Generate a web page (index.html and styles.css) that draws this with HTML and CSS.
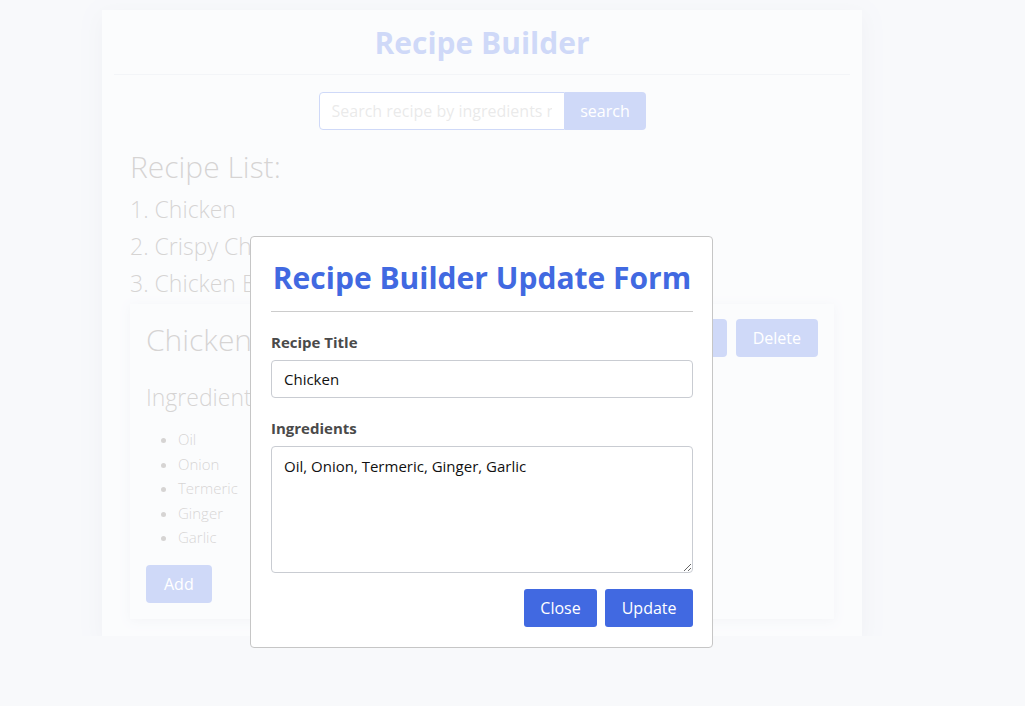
FILE: index.html
```html
<!DOCTYPE html>
<html lang="en">
<head>
  <meta charset="UTF-8">
  <meta name="viewport" content="width=device-width, initial-scale=1.0">
  <title>Recipe Builder</title>
  <link rel="stylesheet" href="styles.css">
</head>
<body>
  <div class="app">
    <header>
      <h1>Recipe Builder</h1>
    </header>

    <div class="search">
      <input type="text" placeholder="Search recipe by ingredients name" />
      <button>search</button>
    </div>

    <main>
      <h2 class="list-title">Recipe List:</h2>
      <div class="recipe-list">
        <p>1. Chicken</p>
        <p>2. Crispy Chicken</p>
        <p>3. Chicken Burger</p>
      </div>

      <!-- Selected recipe -->
      <div class="recipe-card">
        <div class="card-head">
          <h2>Chicken</h2>
          <div class="card-actions">
            <button>Edit</button>
            <button>Delete</button>
          </div>
        </div>
        <h3>Ingredients</h3>
        <ul>
          <li>Oil</li>
          <li>Onion</li>
          <li>Termeric</li>
          <li>Ginger</li>
          <li>Garlic</li>
        </ul>
        <button>Add</button>
      </div>
    </main>
  </div>

  <!-- Update modal -->
  <div class="overlay"></div>
  <div class="modal">
    <h2>Recipe Builder Update Form</h2>
    <label for="title">Recipe Title</label>
    <input type="text" id="title" value="Chicken" />
    <label for="ingredients">Ingredients</label>
    <textarea id="ingredients">Oil, Onion, Termeric, Ginger, Garlic</textarea>
    <div class="modal-actions">
      <button>Close</button>
      <button>Update</button>
    </div>
  </div>
</body>
</html>
```

FILE: styles.css
```css
body {
    font-family: "Open Sans", "Noto Sans", sans-serif;
    margin: 0;
    padding: 0;
    background: #e1e5f0;
  }

  button {
    font-family: inherit;
    background: royalblue;
    color: #fff;
    border: none;
    border-radius: 4px;
    font-size: 16px;
    cursor: pointer;
  }

  .app {
    width: 760px;
    margin: 10px 0 0 102px;
    padding: 0 0 17px;
    background: #eef1f8;
    box-shadow: 0 6px 20px rgba(40, 50, 80, 0.18);
  }

  header {
    margin: 0 12px;
    border-bottom: 1px solid #d0d6e2;
    text-align: center;
  }

  header h1 {
    margin: 0;
    padding: 14px 0 12px;
    font-size: 30px;
    line-height: 38px;
    color: royalblue;
  }

  .search {
    display: flex;
    justify-content: center;
    margin-top: 17px;
  }

  .search input {
    width: 246px;
    height: 38px;
    box-sizing: border-box;
    padding: 0 12px;
    border: 1px solid royalblue;
    border-radius: 4px 0 0 4px;
    background: #fff;
    font-family: inherit;
    font-size: 16px;
  }

  .search input::placeholder {
    color: #aaa;
  }

  .search button {
    width: 81px;
    height: 38px;
    border-radius: 0 4px 4px 0;
  }

  main {
    padding: 0 28px;
  }

  .list-title {
    margin: 15px 0 2px;
    font-size: 30px;
    font-weight: 300;
    line-height: 44px;
    color: #5c5552;
  }

  .recipe-list p {
    margin: 0;
    font-size: 23px;
    font-weight: 300;
    line-height: 37px;
    color: #5c5552;
  }

  .recipe-card {
    margin-top: 2px;
    padding: 14px 16px 16px;
    background: #eef1f8;
    box-shadow: 0 2px 10px rgba(40, 50, 80, 0.14);
  }

  .card-head {
    display: flex;
    justify-content: space-between;
    align-items: flex-start;
  }

  .card-head h2 {
    margin: 0;
    font-size: 30px;
    font-weight: 300;
    line-height: 44px;
    color: #5c5552;
  }

  .card-actions {
    display: flex;
    gap: 9px;
    margin-top: 1px;
  }

  .card-actions button {
    height: 38px;
    padding: 0 17px;
  }

  .recipe-card h3 {
    margin: 18px 0 13px;
    font-size: 23px;
    font-weight: 300;
    line-height: 34px;
    color: #5c5552;
  }

  .recipe-card ul {
    margin: 0 0 15px;
    padding-left: 32px;
    color: #5c5552;
    font-size: 15px;
    line-height: 24.5px;
    font-weight: 300;
  }

  .recipe-card > button {
    height: 38px;
    padding: 0 18px;
  }

  .overlay {
    position: fixed;
    inset: 0;
    background: rgba(255, 255, 255, 0.75);
  }

  .modal {
    position: fixed;
    left: 250px;
    top: 236px;
    width: 463px;
    box-sizing: border-box;
    padding: 18px 19px 20px 20px;
    background: #fff;
    border: 1px solid #c6c6c6;
    border-radius: 4px;
    display: flex;
    flex-direction: column;
  }

  .modal h2 {
    margin: 0 0 20px;
    padding-bottom: 10px;
    border-bottom: 1px solid #ccc;
    font-size: 30px;
    line-height: 46px;
    color: royalblue;
    text-align: center;
  }

  .modal label {
    font-size: 15px;
    font-weight: bold;
    color: #4a4a4a;
    margin-bottom: 8px;
  }

  .modal input,
  .modal textarea {
    box-sizing: border-box;
    border: 1px solid #c9ccd2;
    border-radius: 4px;
    padding: 0 12px;
    font-family: inherit;
    font-size: 15px;
    color: #111;
  }

  .modal input {
    height: 38px;
    margin-bottom: 20px;
  }

  .modal textarea {
    height: 127px;
    padding-top: 9px;
    resize: vertical;
  }

  .modal-actions {
    display: flex;
    justify-content: flex-end;
    gap: 8px;
    margin-top: 16px;
  }

  .modal-actions button {
    height: 38px;
    padding: 0 16.5px;
    border-radius: 3px;
  }
```
